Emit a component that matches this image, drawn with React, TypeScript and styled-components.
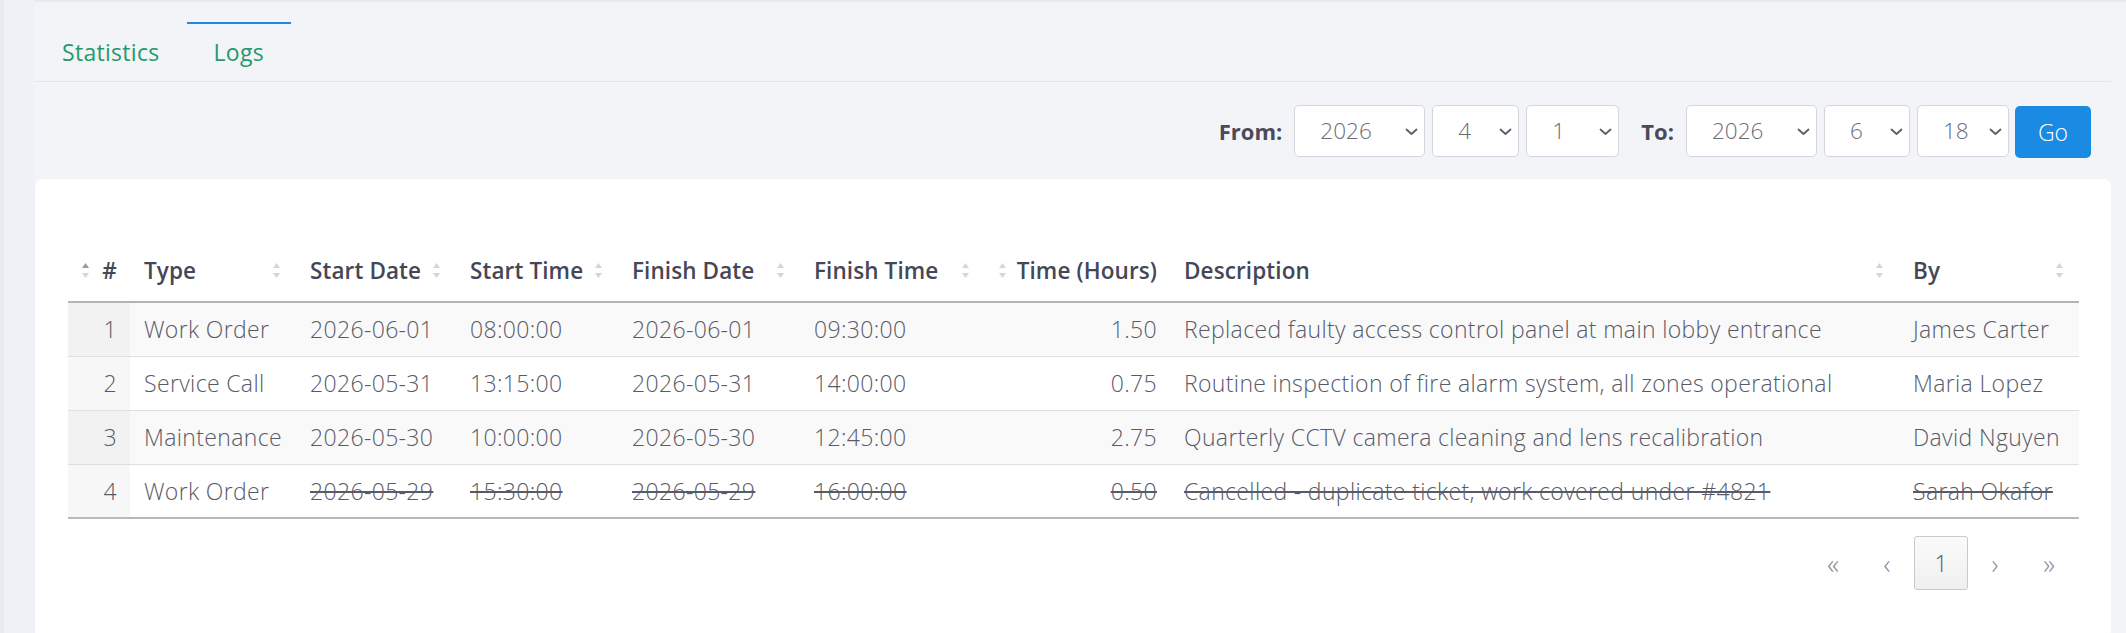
import React from 'react';
import styled, { createGlobalStyle } from 'styled-components';

const GlobalStyle = createGlobalStyle`
  html, body {
    margin: 0;
    padding: 0;
  }
  body {
    background: #f3f4f7;
    font-family: 'Open Sans', 'Liberation Sans', sans-serif;
    color: #585a68;
  }
  * {
    box-sizing: border-box;
  }
`;

const Shell = styled.div`
  display: flex;
  min-height: 633px;
`;

const SideEdge = styled.div`
  width: 35px;
  flex-shrink: 0;
  background: #eef1f5;
  border-left: 4px solid #e8ebef;
`;

const Main = styled.div`
  flex: 1;
  border-top: 2px solid #e6e8eb;
  padding-right: 15px;
  min-width: 0;
`;

const TabBar = styled.div`
  display: flex;
  padding-top: 20px;
  border-bottom: 1px solid #e3e5e9;
`;

const Tab = styled.div<{ $active?: boolean }>`
  display: flex;
  align-items: center;
  height: 59px;
  padding: 0 27px 2px;
  border-top: 2px solid ${({ $active }) => ($active ? '#1e88e5' : 'transparent')};
  color: #25996b;
  font-size: 23px;
  letter-spacing: 0.3px;
  cursor: pointer;
`;

const FilterRow = styled.div`
  display: flex;
  justify-content: flex-end;
  align-items: center;
  padding: 21px 20px 21px 0;
`;

const FilterLabel = styled.span<{ $gapLeft?: number }>`
  font-size: 22px;
  font-weight: 700;
  color: #4a4b59;
  margin-left: ${({ $gapLeft }) => ($gapLeft ? $gapLeft : 0)}px;
  margin-right: 12px;
`;

const SelectWrap = styled.div<{ $width: number }>`
  position: relative;
  width: ${({ $width }) => $width}px;
  margin-right: 7px;
`;

const Select = styled.select`
  appearance: none;
  -webkit-appearance: none;
  width: 100%;
  height: 52px;
  padding: 0 30px 0 25px;
  border: 1px solid #d3d6dc;
  border-radius: 5px;
  background: #fff;
  color: #6a6d77;
  font-family: inherit;
  font-size: 22.5px;
  font-weight: 300;
  outline: none;
`;

const Chevron = styled.svg`
  position: absolute;
  right: 7px;
  top: 23px;
  pointer-events: none;
`;

const GoButton = styled.button`
  width: 76px;
  height: 52px;
  margin-left: -1px;
  margin-top: 3px;
  border: none;
  border-radius: 5px;
  background: #1a8ae2;
  color: #fff;
  font-family: inherit;
  font-size: 23px;
  font-weight: 300;
  cursor: pointer;
`;

const Card = styled.div`
  background: #fff;
  border-radius: 8px;
  padding: 68px 32px 44px 33px;
  min-height: 460px;
`;

const Table = styled.table`
  width: 100%;
  table-layout: fixed;
  border-collapse: collapse;
  font-size: 23px;
  font-weight: 300;
  letter-spacing: 0.35px;
`;

const Th = styled.th<{ $right?: boolean }>`
  height: 55px;
  padding: 0 16px 8px 14px;
  padding-right: ${({ $right }) => ($right ? 13 : 16)}px;
  font-size: 22.5px;
  font-weight: 600;
  letter-spacing: 0.1px;
  color: #454757;
  border-bottom: 2px solid #b3b4b8;
  white-space: nowrap;
`;

const HeadInner = styled.div`
  display: flex;
  align-items: center;
  justify-content: space-between;
`;

const Tr = styled.tr<{ $striped?: boolean }>`
  background: ${({ $striped }) => ($striped ? '#f9f9f9' : '#fff')};
  border-bottom: 1px solid #dedfe2;

  &:last-child {
    border-bottom: 2px solid #b8b9bd;
  }
`;

const Td = styled.td<{ $right?: boolean; $struck?: boolean }>`
  height: 54px;
  padding: 0 ${({ $right }) => ($right ? 13 : 14)}px 0 14px;
  text-align: ${({ $right }) => ($right ? 'right' : 'left')};
  text-decoration: ${({ $struck }) => ($struck ? 'line-through' : 'none')};
  white-space: nowrap;
  overflow: hidden;
`;

const NumCell = styled(Td)<{ $striped?: boolean }>`
  background: ${({ $striped }) => ($striped ? '#f2f2f3' : '#f7f7f8')};
`;

const Pager = styled.div`
  display: flex;
  justify-content: flex-end;
  margin-top: 17px;
  padding-right: 3px;
`;

const PageItem = styled.div<{ $current?: boolean }>`
  width: 54px;
  height: 54px;
  display: flex;
  align-items: center;
  justify-content: center;
  font-size: ${({ $current }) => ($current ? 23 : 27)}px;
  font-weight: 300;
  line-height: 1;
  color: ${({ $current }) => ($current ? '#55576a' : '#8a8b93')};
  border: 1px solid ${({ $current }) => ($current ? '#c9cacf' : 'transparent')};
  border-radius: 3px;
  background: ${({ $current }) => ($current ? 'linear-gradient(#fbfbfb, #efefef)' : 'transparent')};
`;

type SortState = 'none' | 'asc';

function SortIcon({ state = 'none' }: { state?: SortState }) {
  return (
    <svg width="7" height="17" viewBox="0 0 7 17">
      <polygon points="3.5,1 7,6 0,6" fill={state === 'asc' ? '#9a9ca3' : '#d3d5da'} />
      <polygon points="0,11 7,11 3.5,16" fill="#d3d5da" />
    </svg>
  );
}

function ChevronDown() {
  return (
    <Chevron width="13" height="8" viewBox="0 0 13 8">
      <polyline points="1.5,1.5 6.5,6 11.5,1.5" fill="none" stroke="#5b5e66" strokeWidth="1.8" strokeLinecap="round" strokeLinejoin="round" />
    </Chevron>
  );
}

function DateSelect({ width, value, options }: { width: number; value: string; options: string[] }) {
  return (
    <SelectWrap $width={width}>
      <Select defaultValue={value}>
        {options.map((o) => (
          <option key={o} value={o}>
            {o}
          </option>
        ))}
      </Select>
      <ChevronDown />
    </SelectWrap>
  );
}

const years = ['2024', '2025', '2026'];
const months = Array.from({ length: 12 }, (_, i) => String(i + 1));
const days = Array.from({ length: 31 }, (_, i) => String(i + 1));

const columns = [
  { key: 'id', label: '#', width: 62, right: true, sort: 'asc' as SortState },
  { key: 'type', label: 'Type', width: 166 },
  { key: 'startDate', label: 'Start Date', width: 160 },
  { key: 'startTime', label: 'Start Time', width: 162 },
  { key: 'finishDate', label: 'Finish Date', width: 182 },
  { key: 'finishTime', label: 'Finish Time', width: 185 },
  { key: 'hours', label: 'Time (Hours)', width: 185, right: true },
  { key: 'description', label: 'Description', width: 729 },
  { key: 'by', label: 'By', width: 180 },
];

const logs = [
  {
    id: 1,
    type: 'Work Order',
    startDate: '2026-06-01',
    startTime: '08:00:00',
    finishDate: '2026-06-01',
    finishTime: '09:30:00',
    hours: '1.50',
    description: 'Replaced faulty access control panel at main lobby entrance',
    by: 'James Carter',
  },
  {
    id: 2,
    type: 'Service Call',
    startDate: '2026-05-31',
    startTime: '13:15:00',
    finishDate: '2026-05-31',
    finishTime: '14:00:00',
    hours: '0.75',
    description: 'Routine inspection of fire alarm system, all zones operational',
    by: 'Maria Lopez',
  },
  {
    id: 3,
    type: 'Maintenance',
    startDate: '2026-05-30',
    startTime: '10:00:00',
    finishDate: '2026-05-30',
    finishTime: '12:45:00',
    hours: '2.75',
    description: 'Quarterly CCTV camera cleaning and lens recalibration',
    by: 'David Nguyen',
  },
  {
    id: 4,
    type: 'Work Order',
    startDate: '2026-05-29',
    startTime: '15:30:00',
    finishDate: '2026-05-29',
    finishTime: '16:00:00',
    hours: '0.50',
    description: 'Cancelled - duplicate ticket, work covered under #4821',
    by: 'Sarah Okafor',
    cancelled: true,
  },
];

function App() {
  return (
    <Shell>
      <GlobalStyle />
      <SideEdge />
      <Main>
        <TabBar>
          <Tab>Statistics</Tab>
          <Tab $active>Logs</Tab>
        </TabBar>

        <FilterRow>
          <FilterLabel>From:</FilterLabel>
          <DateSelect width={131} value="2026" options={years} />
          <DateSelect width={87} value="4" options={months} />
          <DateSelect width={93} value="1" options={days} />
          <FilterLabel $gapLeft={15}>To:</FilterLabel>
          <DateSelect width={131} value="2026" options={years} />
          <DateSelect width={86} value="6" options={months} />
          <DateSelect width={92} value="18" options={days} />
          <GoButton>Go</GoButton>
        </FilterRow>

        <Card>
          <Table>
            <colgroup>
              {columns.map((c) => (
                <col key={c.key} style={{ width: c.width }} />
              ))}
            </colgroup>
            <thead>
              <tr>
                {columns.map((c) => (
                  <Th key={c.key} $right={c.right}>
                    <HeadInner>
                      {c.right ? (
                        <>
                          <SortIcon state={c.sort} />
                          <span>{c.label}</span>
                        </>
                      ) : (
                        <>
                          <span>{c.label}</span>
                          <SortIcon state={c.sort} />
                        </>
                      )}
                    </HeadInner>
                  </Th>
                ))}
              </tr>
            </thead>
            <tbody>
              {logs.map((row, i) => {
                const striped = i % 2 === 0;
                const struck = !!row.cancelled;
                return (
                  <Tr key={row.id} $striped={striped}>
                    <NumCell $right $striped={striped}>
                      {row.id}
                    </NumCell>
                    <Td>{row.type}</Td>
                    <Td $struck={struck}>{row.startDate}</Td>
                    <Td $struck={struck}>{row.startTime}</Td>
                    <Td $struck={struck}>{row.finishDate}</Td>
                    <Td $struck={struck}>{row.finishTime}</Td>
                    <Td $right $struck={struck}>
                      {row.hours}
                    </Td>
                    <Td $struck={struck}>{row.description}</Td>
                    <Td $struck={struck}>{row.by}</Td>
                  </Tr>
                );
              })}
            </tbody>
          </Table>

          <Pager>
            <PageItem>«</PageItem>
            <PageItem>‹</PageItem>
            <PageItem $current>1</PageItem>
            <PageItem>›</PageItem>
            <PageItem>»</PageItem>
          </Pager>
        </Card>
      </Main>
    </Shell>
  );
}

export default App;
